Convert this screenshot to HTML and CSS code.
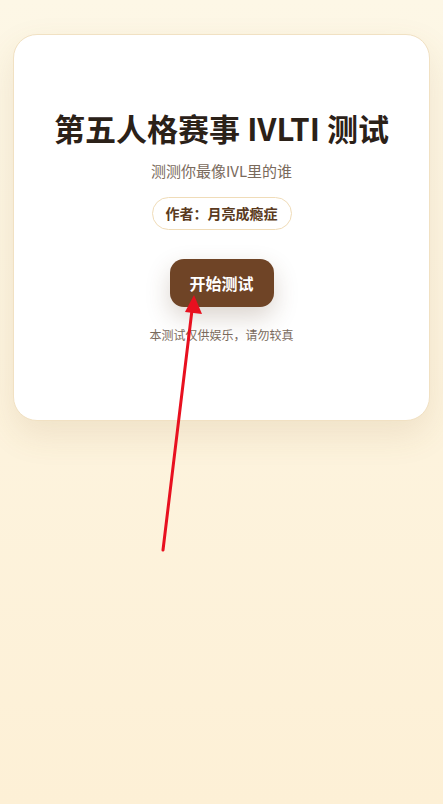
FILE: index.html
```html
<!DOCTYPE html>
<html lang="zh">
<head>
<meta charset="utf-8">
<title>第五人格赛事 IVLTI 测试</title>
<link rel="stylesheet" href="styles.css">
</head>
<body>
<main class="page">
  <section class="card">
    <h1 class="title">第五人格赛事 IVLTI 测试</h1>
    <p class="subtitle">测测你最像IVL里的谁</p>
    <div class="author">作者：月亮成瘾症</div>
    <button class="start">开始测试</button>
    <p class="note">本测试仅供娱乐，请勿较真</p>
  </section>
</main>
<svg class="arrow" width="443" height="804" viewBox="0 0 443 804" aria-hidden="true">
  <line x1="163" y1="550" x2="192" y2="310" stroke="#e8101f" stroke-width="3" stroke-linecap="round"/>
  <polygon points="194,295 185,312 202,314" fill="#e8101f"/>
</svg>
</body>
</html>
```
FILE: styles.css
```css
html, body {
  margin: 0;
  padding: 0;
}
body {
  min-height: 804px;
  background: linear-gradient(180deg, #fdf7e6 0%, #fdf0d6 100%);
  font-family: "Noto Sans CJK SC", sans-serif;
  color: #2b2118;
}
.page {
  padding: 34px 13px;
}
.card {
  background: #ffffff;
  border: 1px solid #f1e1c3;
  border-radius: 24px;
  box-shadow: 0 14px 34px rgba(140, 100, 40, 0.12);
  padding: 72px 20px 76px;
  display: flex;
  flex-direction: column;
  align-items: center;
  text-align: center;
}
.title {
  margin: 0;
  font-size: 31px;
  line-height: 42px;
  font-weight: 700;
  color: #2b2118;
  white-space: nowrap;
}
.subtitle {
  margin: 11px 0 0;
  font-size: 15px;
  line-height: 22px;
  color: #7a6a5c;
}
.author {
  margin-top: 15px;
  padding: 6px 13px;
  border: 1px solid #f0dcb8;
  border-radius: 999px;
  font-family: "Noto Sans CJK TC", sans-serif;
  font-size: 14px;
  line-height: 19px;
  font-weight: 700;
  color: #5a3a20;
}
.start {
  margin-top: 29px;
  width: 104px;
  height: 48px;
  border: none;
  border-radius: 14px;
  background: #6f4426;
  color: #ffffff;
  font-family: "Noto Sans CJK SC", serif;
  font-size: 16px;
  font-weight: 700;
  box-shadow: 0 10px 24px rgba(90, 60, 30, 0.22);
  cursor: pointer;
}
.note {
  margin: 19px 0 0;
  font-family: "Noto Sans CJK TC", sans-serif;
  font-size: 12px;
  line-height: 18px;
  color: #7a6a5c;
}
.arrow {
  position: absolute;
  left: 0;
  top: 0;
  pointer-events: none;
}
```
